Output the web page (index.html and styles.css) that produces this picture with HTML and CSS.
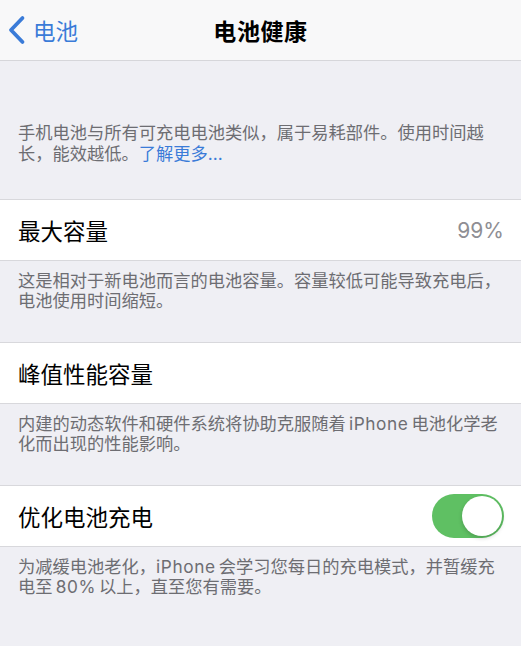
FILE: index.html
```html
<!DOCTYPE html>
<html lang="zh-CN">
<head>
<meta charset="utf-8">
<title>电池健康</title>
<link rel="stylesheet" href="styles.css">
</head>
<body>
<header class="navbar">
  <a class="back" href="#">
    <svg class="chevron" width="19" height="30" viewBox="0 0 19 30" aria-hidden="true">
      <path d="M15.5 3 L4 15 L15.5 27" fill="none" stroke="currentColor" stroke-width="3.8" stroke-linecap="round" stroke-linejoin="round"/>
    </svg>
    <span>电池</span>
  </a>
  <h1 class="title">电池健康</h1>
</header>

<main class="content">
  <p class="note intro">手机电池与所有可充电电池类似，属于易耗部件。使用时间越长，能效越低。<a class="link" href="#">了解更多...</a></p>

  <section class="group">
    <div class="cell">
      <span class="label">最大容量</span>
      <span class="value">99%</span>
    </div>
    <p class="note">这是相对于新电池而言的电池容量。容量较低可能导致充电后，电池使用时间缩短。</p>
  </section>

  <section class="group">
    <div class="cell">
      <span class="label">峰值性能容量</span>
    </div>
    <p class="note">内建的动态软件和硬件系统将协助克服随着&#8201;<span class="latin">iPhone</span>&#8201;电池化学老化而出现的性能影响。</p>
  </section>

  <section class="group">
    <div class="cell">
      <span class="label">优化电池充电</span>
      <span class="toggle on" role="switch" aria-checked="true"><span class="knob"></span></span>
    </div>
    <p class="note">为减缓电池老化，<span class="latin">iPhone</span>&#8201;会学习您每日的充电模式，并暂缓充电至&#8201;<span class="latin">80%</span>&#8201;以上，直至您有需要。</p>
  </section>
</main>
</body>
</html>
```

FILE: styles.css
```css
* { box-sizing: border-box; }

html, body {
  margin: 0;
  padding: 0;
  background: #efeff4;
  font-family: Inter, "Noto Sans CJK SC", sans-serif;
  color: #000;
}

.navbar {
  height: 61px;
  background: #f8f8f9;
  border-bottom: 1px solid #d6d6da;
  display: grid;
  grid-template-columns: 1fr auto 1fr;
  align-items: center;
}

.back {
  display: flex;
  align-items: center;
  gap: 7px;
  padding-left: 7px;
  color: #3a7bd8;
  text-decoration: none;
  font-size: 22.5px;
  justify-self: start;
}

.chevron { display: block; }

.title {
  margin: 0;
  font-size: 23px;
  font-weight: 700;
  letter-spacing: 0.6px;
}

.content { display: flex; flex-direction: column; }

.note {
  margin: 0;
  padding: 10px 18px 32px;
  font-size: 17.25px;
  line-height: 20px;
  color: #6d6d72;
}

.note.intro { padding-top: 62px; padding-bottom: 35px; line-height: 20.5px; }

/* Latin runs inside Chinese copy are set a touch looser */
.latin { letter-spacing: 0.6px; }

.link { color: #3a7bd8; text-decoration: none; }

.group + .group .cell { margin-top: -1px; }

.cell {
  height: 62px;
  background: #fff;
  border-top: 1px solid #d8d8dc;
  border-bottom: 1px solid #d8d8dc;
  display: flex;
  align-items: center;
  justify-content: space-between;
  padding: 0 17px 0 18px;
}

.label { font-size: 22.5px; }

.value { font-size: 21px; color: #8e8e93; }

.toggle {
  width: 72px;
  height: 44px;
  border-radius: 22px;
  background: #5fc063;
  display: flex;
  align-items: center;
  justify-content: flex-end;
  padding: 2px;
}

.knob {
  width: 40px;
  height: 40px;
  border-radius: 50%;
  background: #fff;
  box-shadow: 0 2px 4px rgba(0,0,0,0.18);
}
```
